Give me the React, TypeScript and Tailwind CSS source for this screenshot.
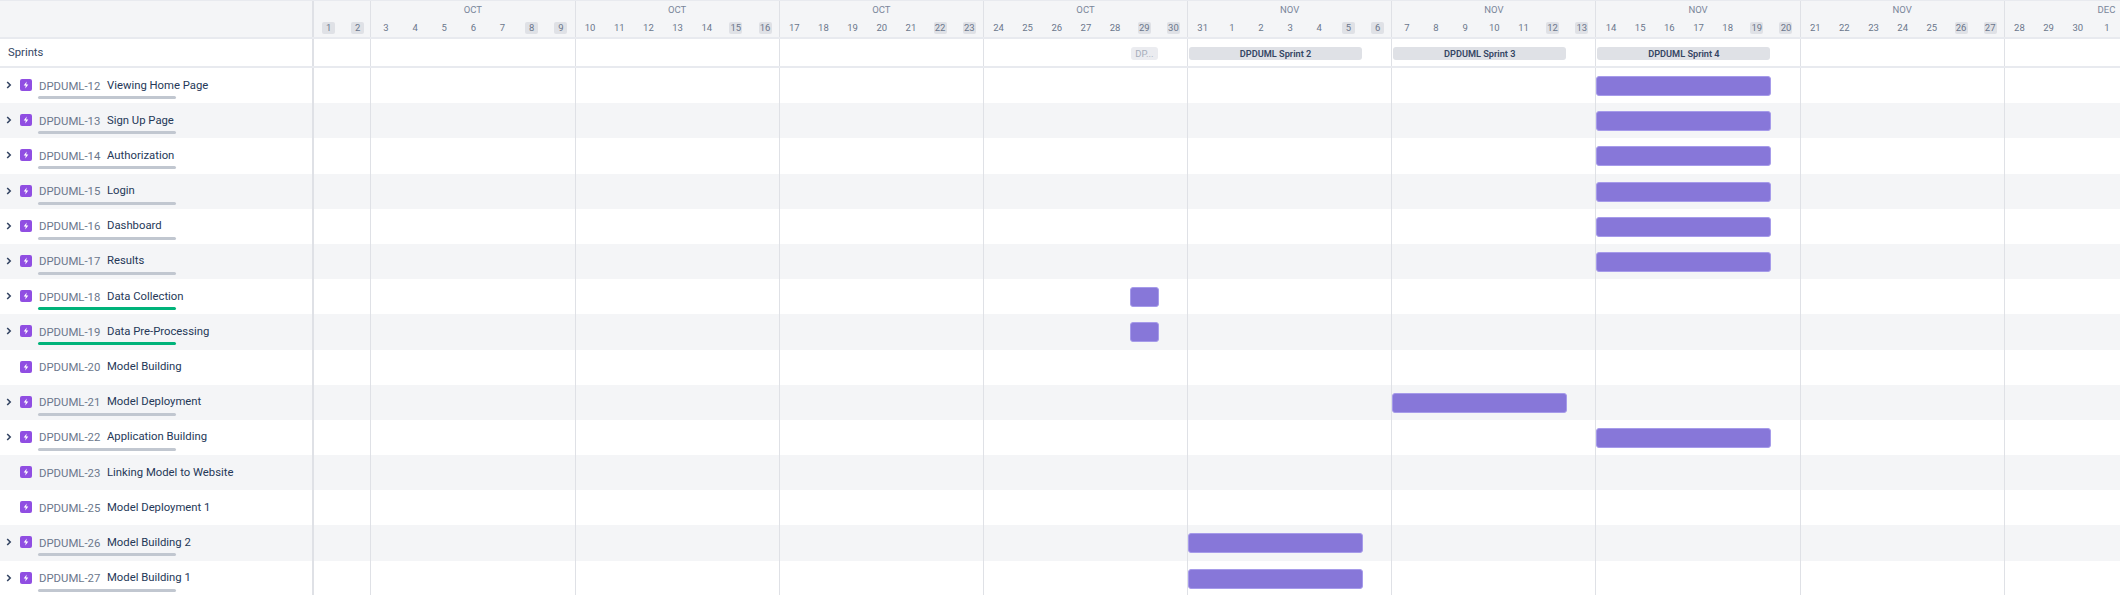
const DAY = 29.17;

// off = days of the week cut off on the left, width = days the column covers
const weeks = [
  { label: "", days: [1, 2], off: 5, width: 2 },
  { label: "OCT", days: [3, 4, 5, 6, 7, 8, 9], off: 0, width: 7 },
  { label: "OCT", days: [10, 11, 12, 13, 14, 15, 16], off: 0, width: 7 },
  { label: "OCT", days: [17, 18, 19, 20, 21, 22, 23], off: 0, width: 7 },
  { label: "OCT", days: [24, 25, 26, 27, 28, 29, 30], off: 0, width: 7 },
  { label: "NOV", days: [31, 1, 2, 3, 4, 5, 6], off: 0, width: 7 },
  { label: "NOV", days: [7, 8, 9, 10, 11, 12, 13], off: 0, width: 7 },
  { label: "NOV", days: [14, 15, 16, 17, 18, 19, 20], off: 0, width: 7 },
  { label: "NOV", days: [21, 22, 23, 24, 25, 26, 27], off: 0, width: 7 },
  { label: "DEC", days: [28, 29, 30, 1], off: 0, width: 7 },
];

type Issue = {
  id: string;
  name: string;
  kids?: boolean;
  done?: boolean;
  start?: number;
  span?: number;
};

const issues: Issue[] = [
  { id: "DPDUML-12", name: "Viewing Home Page", kids: true, start: 44, span: 6 },
  { id: "DPDUML-13", name: "Sign Up Page", kids: true, start: 44, span: 6 },
  { id: "DPDUML-14", name: "Authorization", kids: true, start: 44, span: 6 },
  { id: "DPDUML-15", name: "Login", kids: true, start: 44, span: 6 },
  { id: "DPDUML-16", name: "Dashboard", kids: true, start: 44, span: 6 },
  { id: "DPDUML-17", name: "Results", kids: true, start: 44, span: 6 },
  { id: "DPDUML-18", name: "Data Collection", kids: true, done: true, start: 28, span: 1 },
  { id: "DPDUML-19", name: "Data Pre-Processing", kids: true, done: true, start: 28, span: 1 },
  { id: "DPDUML-20", name: "Model Building" },
  { id: "DPDUML-21", name: "Model Deployment", kids: true, start: 37, span: 6 },
  { id: "DPDUML-22", name: "Application Building", kids: true, start: 44, span: 6 },
  { id: "DPDUML-23", name: "Linking Model to Website" },
  { id: "DPDUML-25", name: "Model Deployment 1" },
  { id: "DPDUML-26", name: "Model Building 2", kids: true, start: 30, span: 6 },
  { id: "DPDUML-27", name: "Model Building 1", kids: true, start: 30, span: 6 },
];

const sprints = [
  { name: "DP...", start: 28, span: 1, faded: true },
  { name: "DPDUML Sprint 2", start: 30, span: 6 },
  { name: "DPDUML Sprint 3", start: 37, span: 6 },
  { name: "DPDUML Sprint 4", start: 44, span: 6 },
];

const WeekLines = () => (
  <div className="col-start-1 row-start-1 flex h-full">
    {weeks.map((w, i) => (
      <div
        key={i}
        className={`h-full shrink-0 ${i === 0 ? "border-l-2" : "border-l"} border-[#dfe1e6]`}
        style={{ width: w.width * DAY }}
      />
    ))}
  </div>
);

const EpicIcon = () => (
  <svg width="12" height="12" viewBox="0 0 12 12" className="shrink-0">
    <rect width="12" height="12" rx="2" fill="#904ee2" />
    <path d="M6.7 2.4 3.7 6.4h2l-.4 3.2 3-4.1H6.2z" fill="#fff" />
  </svg>
);

const Chevron = () => (
  <svg width="6" height="8" viewBox="0 0 6 8" className="shrink-0">
    <path d="M1.2 1 4.2 4 1.2 7" fill="none" stroke="#344563" strokeWidth="1.6" />
  </svg>
);

const IssueRow = ({ issue, shaded }: { issue: Issue; shaded: boolean }) => (
  <div className={`flex h-[35.2px] ${shaded ? "bg-[#f4f5f7]" : "bg-white"}`}>
    <div className="w-[312px] shrink-0 pt-[9px]">
      <div className="flex h-4 items-center">
        <div className="flex w-5 shrink-0 justify-center pr-[3px]">{issue.kids && <Chevron />}</div>
        <EpicIcon />
        <span className="ml-[7px] w-[68px] shrink-0 whitespace-nowrap pt-[1px] text-[11.35px] leading-4 text-[#6b778c]">
          {issue.id}
        </span>
        <span className="whitespace-nowrap pt-[1px] text-[11.3px] leading-4 text-[#253858]">{issue.name}</span>
      </div>
      {issue.kids && (
        <div
          className={`ml-[38px] mt-[3px] h-[3px] w-[138px] rounded-full ${issue.done ? "bg-[#00b37a]" : "bg-[#c1c7d0]"}`}
        />
      )}
    </div>
    <div className="grid grid-cols-1 grid-rows-1">
      <WeekLines />
      {issue.start !== undefined && (
        <div className="col-start-1 row-start-1 flex h-full items-start pt-2">
          <div
            className="h-[20px] rounded-[3px] border border-[#a69bea] bg-[#8777d9]"
            style={{ marginLeft: issue.start * DAY + 1, width: (issue.span ?? 1) * DAY }}
          />
        </div>
      )}
    </div>
  </div>
);

export default function App() {
  return (
    <div className="h-[595px] w-[2120px] overflow-hidden bg-white font-['Roboto',sans-serif]">
      {/* header */}
      <div className="flex h-[39px] border-y border-b-2 border-[#e8eaef] bg-[#f4f5f7]">
        <div className="w-[312px] shrink-0" />
        <div className="flex">
          {weeks.map((w, i) => (
            <div
              key={i}
              className={`flex shrink-0 flex-col ${i === 0 ? "border-l-2" : "border-l"} border-[#dfe1e6]`}
              style={{ width: w.width * DAY }}
            >
              <div className="h-[21px] pt-[1px] text-center text-[9.5px] leading-4 text-[#7a869a]">{w.label}</div>
              <div className="flex">
                {w.days.map((d, j) => (
                  <div key={j} className="flex shrink-0 justify-center" style={{ width: DAY }}>
                    <span
                      className={`flex h-[12px] w-[13px] items-center justify-center rounded-[2px] text-[9.5px] leading-3 text-[#6b778c] ${j + w.off >= 5 ? "bg-[#dfe1e6]" : ""}`}
                    >
                      {d}
                    </span>
                  </div>
                ))}
              </div>
            </div>
          ))}
        </div>
      </div>

      {/* sprints */}
      <div className="flex h-[29px] border-b-2 border-[#e8eaef]">
        <div className="w-[312px] shrink-0 pl-2 pt-[6px] text-[11.3px] leading-4 text-[#344563]">Sprints</div>
        <div className="grid grid-cols-1 grid-rows-1">
          <WeekLines />
          <div className="col-start-1 row-start-1 flex pt-2">
            {sprints.map((s, i) => {
              const prev = i > 0 ? sprints[i - 1].start + sprints[i - 1].span : 0;
              return (
                <div
                  key={s.name}
                  className={`flex h-[13px] shrink-0 items-center justify-center rounded-[3px] leading-3 ${s.faded ? "bg-[#ebecf0] text-[9.5px] text-[#a5adba]" : "bg-[#dfe1e6] text-[9.2px] font-semibold text-[#344563]"}`}
                  style={{ marginLeft: (s.start - prev) * DAY + 2, width: s.span * DAY - 2 }}
                >
                  {s.name}
                </div>
              );
            })}
          </div>
        </div>
      </div>

      {issues.map((issue, i) => (
        <IssueRow key={issue.id} issue={issue} shaded={i % 2 === 1} />
      ))}
    </div>
  );
}
